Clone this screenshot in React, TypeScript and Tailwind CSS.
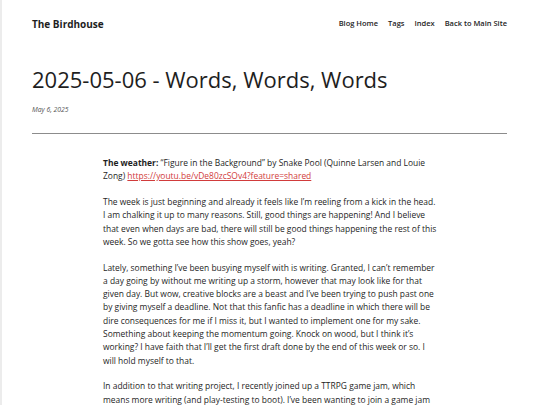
const paragraphs = [
  "The week is just beginning and already it feels like I\u2019m reeling from a kick in the head. I am chalking it up to many reasons. Still, good things are happening! And I believe that even when days are bad, there will still be good things happening the rest of this week. So we gotta see how this show goes, yeah?",
  "Lately, something I\u2019ve been busying myself with is writing. Granted, I can\u2019t remember a day going by without me writing up a storm, however that may look like for that given day. But wow, creative blocks are a beast and I\u2019ve been trying to push past one by giving myself a deadline. Not that this fanfic has a deadline in which there will be dire consequences for me if I miss it, but I wanted to implement one for my sake. Something about keeping the momentum going. Knock on wood, but I think it\u2019s working? I have faith that I\u2019ll get the first draft done by the end of this week or so. I will hold myself to that.",
  "In addition to that writing project, I recently joined up a TTRPG game jam, which means more writing (and play-testing to boot). I\u2019ve been wanting to join a game jam for a while now, and this felt like the right time to finally do it.",
];

const navLinks = ['Blog Home', 'Tags', 'Index', 'Back to Main Site'];

export default function App() {
  return (
    <div className="h-[405px] overflow-hidden bg-white border-l-2 border-[#ececec] text-[#1e1e1e] font-['Open_Sans',sans-serif]">
      <div className="pl-[30px] pr-[33px]">
        {/* Header */}
        <header className="flex items-center justify-between pt-[16px] h-[32px]">
          <a className="text-[10px] font-bold">The Birdhouse</a>
          <nav className="flex gap-[10px] text-[7.5px] font-semibold">
            {navLinks.map((link) => (
              <a key={link}>{link}</a>
            ))}
          </nav>
        </header>

        {/* Title */}
        <h1 className="mt-[33px] text-[22px] leading-[28px] font-normal">
          2025-05-06 - Words, Words, Words
        </h1>
        <p className="mt-[12px] text-[6.8px] leading-[9px] italic text-[#555]">May 6, 2025</p>
        <hr className="mt-[19px] border-t border-[#8c8c8c]" />
      </div>

      {/* Post body */}
      <article className="mx-auto w-[336px] mt-[22px] text-[8.45px] leading-[13.3px]">
        <p>
          <span className="font-bold">The weather:</span> &ldquo;Figure in the Background&rdquo; by Snake Pool (Quinne Larsen and Louie Zong){' '}
          <a className="text-[#d13b3b] underline">https://youtu.be/vDe80zcSOv4?feature=shared</a>
        </p>
        {paragraphs.map((text, i) => (
          <p key={i} className="mt-[12.4px]">
            {text}
          </p>
        ))}
      </article>
    </div>
  );
}
